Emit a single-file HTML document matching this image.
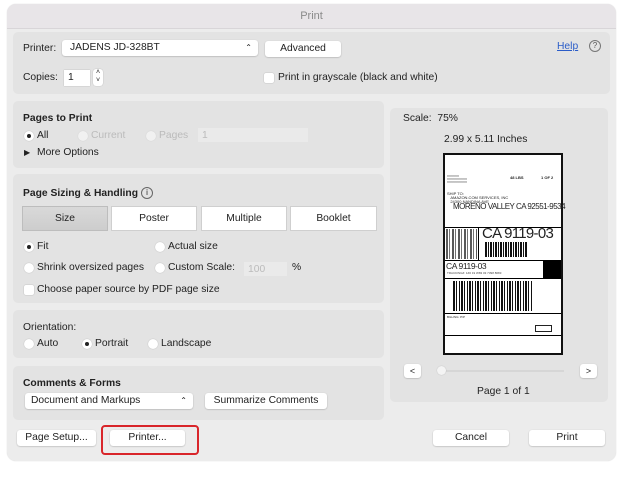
<!DOCTYPE html>
<html><head><meta charset="utf-8"><style>
*{box-sizing:border-box;margin:0;padding:0}
body{width:620px;height:479px;background:#fff;font-family:"Liberation Sans",sans-serif;font-size:10.3px;color:#222;position:relative;overflow:hidden}
.a{position:absolute}
.win{left:7px;top:4px;width:609px;height:457px;background:#ececec;border-radius:9px;overflow:hidden;box-shadow:0 0 1px #ccc}
.pan{background:#e3e3e3;border-radius:5px}
.btn{background:#fff;border-radius:3px;box-shadow:0 0.5px 1.5px rgba(0,0,0,.25);text-align:center;line-height:16px;font-size:10.3px;height:16px}
.b{font-weight:bold}
.rad{width:10px;height:10px;border-radius:50%;background:#fff;box-shadow:0 0 1px rgba(0,0,0,.3)}
.rad.on::after{content:"";position:absolute;left:3px;top:3px;width:4px;height:4px;border-radius:50%;background:#222}
.chk{width:10px;height:10px;border-radius:2px;background:#fff;box-shadow:0 0 1px rgba(0,0,0,.35)}
.tab{top:206px;height:25px;background:#fff;border:1px solid #cfcfcf;text-align:center;line-height:23px;font-size:10.3px}
.lt{color:#bbb}
.ln{position:absolute;background:#000}
</style></head><body>
<div class="a win"></div>
<div class="a" style="left:7px;top:4px;width:609px;height:25px;background:#e8e5e8;border-radius:9px 9px 0 0;border-bottom:1px solid #d8d5d8;text-align:center;line-height:24px;font-size:11px;color:#8a8a8a">Print</div>

<div class="a pan" style="left:13px;top:32px;width:597px;height:62px"></div>
<div class="a" style="left:23px;top:43px">Printer:</div>
<div class="a btn" style="left:62px;top:40px;width:196px;text-align:left;padding-left:8px">JADENS JD-328BT<span style="position:absolute;right:6px;font-size:8px">⌃</span></div>
<div class="a btn" style="left:265px;top:41px;width:76px">Advanced</div>
<div class="a" style="left:557px;top:41px;color:#2a5cc8;text-decoration:underline">Help</div>
<div class="a" style="left:589px;top:40px;width:12px;height:12px;border:1px solid #777;border-radius:50%;font-size:8px;text-align:center;line-height:10px;color:#555">?</div>
<div class="a" style="left:23px;top:72px">Copies:</div>
<div class="a" style="left:64px;top:70px;width:26px;height:16px;background:#fff;box-shadow:0 0 1px rgba(0,0,0,.3);padding:2px 4px;line-height:12px">1</div>
<div class="a" style="left:93px;top:69px;width:10px;height:17px;background:#fff;border-radius:3px;box-shadow:0 0 1px rgba(0,0,0,.3);font-size:7px;text-align:center;line-height:8px">˄<br>˅</div>
<div class="a chk" style="left:264px;top:73px"></div>
<div class="a" style="left:278px;top:72px">Print in grayscale (black and white)</div>

<div class="a pan" style="left:13px;top:101px;width:371px;height:67px"></div>
<div class="a b" style="left:23px;top:113px">Pages to Print</div>
<div class="a rad on" style="left:24px;top:131px"></div>
<div class="a" style="left:37px;top:130px">All</div>
<div class="a rad" style="left:78px;top:131px;opacity:.5"></div>
<div class="a lt" style="left:91px;top:130px">Current</div>
<div class="a rad" style="left:146px;top:131px;opacity:.5"></div>
<div class="a lt" style="left:159px;top:130px">Pages</div>
<div class="a" style="left:198px;top:128px;width:110px;height:14px;background:#eaeaea;color:#bbb;padding:2px 4px">1</div>
<div class="a" style="left:24px;top:148px;font-size:8px">▶</div>
<div class="a" style="left:37px;top:147px">More Options</div>

<div class="a pan" style="left:13px;top:174px;width:371px;height:129px"></div>
<div class="a b" style="left:23px;top:188px">Page Sizing &amp; Handling</div>
<div class="a" style="left:141px;top:187px;width:12px;height:12px;border:1px solid #666;border-radius:50%;font-size:8px;text-align:center;line-height:10px">i</div>
<div class="a tab" style="left:22px;width:86px;background:linear-gradient(#d9d9d9,#cdcdcd);border-color:#bdbdbd">Size</div>
<div class="a tab" style="left:111px;width:86px">Poster</div>
<div class="a tab" style="left:201px;width:86px">Multiple</div>
<div class="a tab" style="left:290px;width:87px">Booklet</div>
<div class="a rad on" style="left:24px;top:242px"></div>
<div class="a" style="left:37px;top:241px">Fit</div>
<div class="a rad" style="left:155px;top:242px"></div>
<div class="a" style="left:168px;top:241px">Actual size</div>
<div class="a rad" style="left:24px;top:263px"></div>
<div class="a" style="left:37px;top:262px">Shrink oversized pages</div>
<div class="a rad" style="left:155px;top:263px"></div>
<div class="a" style="left:168px;top:262px">Custom Scale:</div>
<div class="a" style="left:244px;top:262px;width:43px;height:14px;background:#eaeaea;color:#bbb;padding:2px 4px">100</div>
<div class="a" style="left:292px;top:262px">%</div>
<div class="a chk" style="left:24px;top:285px"></div>
<div class="a" style="left:37px;top:284px">Choose paper source by PDF page size</div>

<div class="a pan" style="left:13px;top:310px;width:371px;height:48px"></div>
<div class="a" style="left:23px;top:322px">Orientation:</div>
<div class="a rad" style="left:24px;top:339px"></div>
<div class="a" style="left:37px;top:338px">Auto</div>
<div class="a rad on" style="left:82px;top:339px"></div>
<div class="a" style="left:95px;top:338px">Portrait</div>
<div class="a rad" style="left:148px;top:339px"></div>
<div class="a" style="left:161px;top:338px">Landscape</div>

<div class="a pan" style="left:13px;top:366px;width:371px;height:54px"></div>
<div class="a b" style="left:23px;top:378px">Comments &amp; Forms</div>
<div class="a btn" style="left:25px;top:393px;width:168px;text-align:left;padding-left:6px">Document and Markups<span style="position:absolute;right:6px;font-size:8px">⌃</span></div>
<div class="a btn" style="left:205px;top:393px;width:122px">Summarize Comments</div>

<div class="a btn" style="left:17px;top:430px;width:79px">Page Setup...</div>
<div class="a btn" style="left:110px;top:430px;width:75px">Printer...</div>
<div class="a" style="left:101px;top:425px;width:98px;height:30px;border:2px solid #d9262b;border-radius:4px"></div>
<div class="a btn" style="left:433px;top:430px;width:76px">Cancel</div>
<div class="a btn" style="left:529px;top:430px;width:76px">Print</div>

<div class="a pan" style="left:390px;top:108px;width:218px;height:294px"></div>
<div class="a" style="left:403px;top:113px">Scale:&nbsp; 75%</div>
<div class="a" style="left:444px;top:134px">2.99 x 5.11 Inches</div>
<div class="a" style="left:443px;top:153px;width:120px;height:202px;background:#fff;border:2px solid #111"></div>
<div class="a" style="left:447px;top:175px;font-size:3px;line-height:3px;color:#444">XXXXXX<br>XXXXXXXXXX<br>XXXXXXXXXX</div>
<div class="a b" style="left:510px;top:175px;font-size:4px">48 LBS</div>
<div class="a b" style="left:541px;top:175px;font-size:4px">1 OF 2</div>
<div class="a" style="left:447px;top:192px;font-size:4px;line-height:4px">SHIP TO:<br>&nbsp;&nbsp;&nbsp;AMAZON.COM SERVICES, INC<br>&nbsp;&nbsp;&nbsp;24300 NANDINA AVE</div>
<div class="a" style="left:453px;top:202px;font-size:8px;letter-spacing:-.5px;white-space:nowrap">MORENO VALLEY CA 92551-9534</div>
<div class="ln" style="left:445px;top:227px;width:116px;height:1px"></div>
<div class="a" style="left:446px;top:229px;width:31px;height:30px;background:repeating-linear-gradient(90deg,#222 0 2px,#fff 2px 3px,#444 3px 4px,#fff 4px 6px),#fff;opacity:.75"></div>
<div class="ln" style="left:478px;top:228px;width:1px;height:32px"></div>
<div class="a" style="left:482px;top:225px;font-size:15px;letter-spacing:-.7px">CA 9119-03</div>
<div class="a" style="left:485px;top:242px;width:43px;height:15px;background:repeating-linear-gradient(90deg,#111 0 2px,#fff 2px 3px,#111 3px 4px,#fff 4px 5px)"></div>
<div class="ln" style="left:445px;top:260px;width:116px;height:1px"></div>
<div class="a" style="left:446px;top:261px;font-size:8.5px;letter-spacing:-.4px">CA 9119-03</div>
<div class="a" style="left:447px;top:271px;font-size:3px;color:#444">TRACKING#: 1Z0 19 W83 03 7398 8683</div>
<div class="a" style="left:543px;top:261px;width:18px;height:17px;background:#000"></div>
<div class="ln" style="left:445px;top:278px;width:116px;height:1px"></div>
<div class="a" style="left:453px;top:281px;width:79px;height:30px;background:repeating-linear-gradient(90deg,#111 0 2px,#fff 2px 3px,#111 3px 4px,#fff 4px 6px,#111 6px 7px,#fff 7px 8px)"></div>
<div class="ln" style="left:445px;top:313px;width:116px;height:1px"></div>
<div class="a" style="left:447px;top:315px;font-size:3px">BILLING: P/P</div>
<div class="a" style="left:535px;top:325px;width:17px;height:7px;border:1px solid #222"></div>
<div class="ln" style="left:445px;top:335px;width:116px;height:1px"></div>
<div class="a btn" style="left:404px;top:364px;width:17px;height:14px;line-height:14px;font-size:9px">&lt;</div>
<div class="a" style="left:438px;top:370px;width:126px;height:2px;background:#d6d6d6"></div>
<div class="a" style="left:437px;top:366px;width:9px;height:9px;border-radius:50%;background:#f4f4f4;box-shadow:0 0 1px #aaa"></div>
<div class="a btn" style="left:580px;top:364px;width:17px;height:14px;line-height:14px;font-size:9px">&gt;</div>
<div class="a" style="left:477px;top:386px">Page 1 of 1</div>
</body></html>
